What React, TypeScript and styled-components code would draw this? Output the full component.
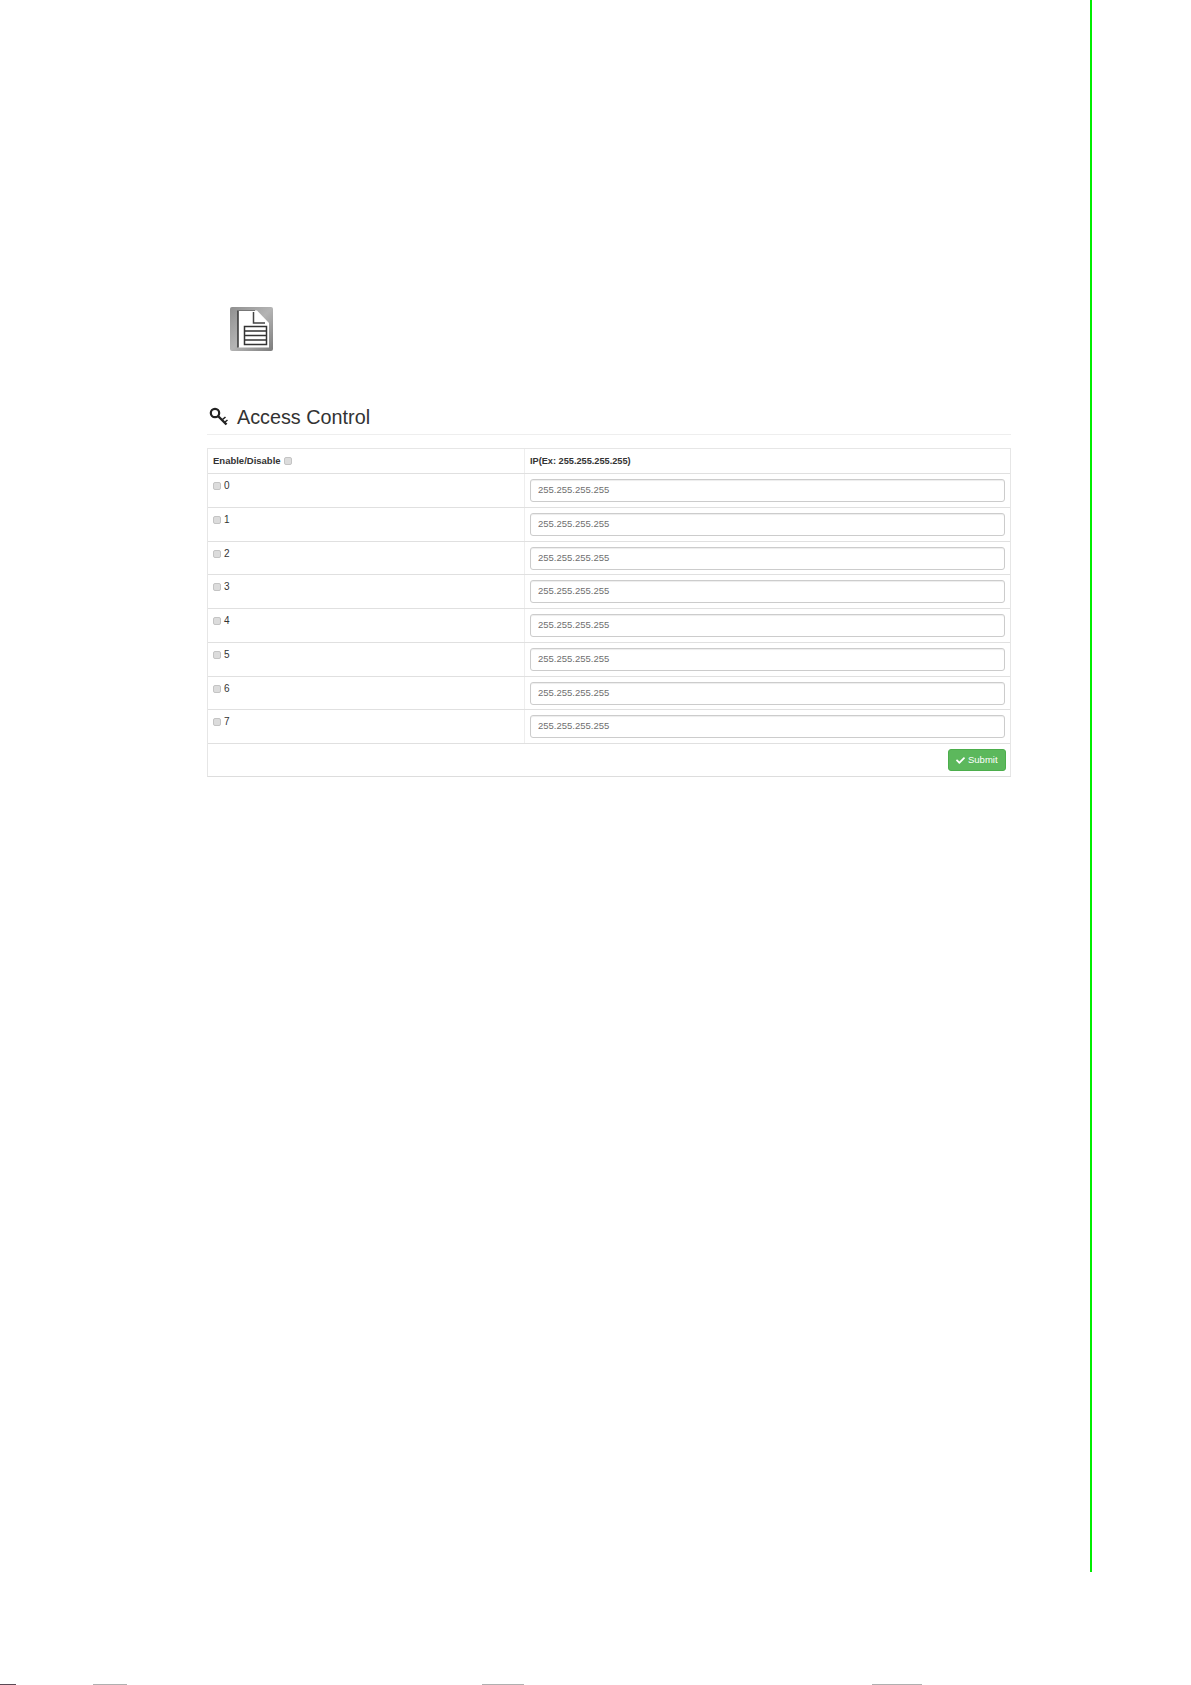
import styled, { createGlobalStyle } from 'styled-components';
import { FaCheck } from 'react-icons/fa';

const GlobalStyle = createGlobalStyle`
  html, body {
    margin: 0;
    padding: 0;
    background: #fff;
  }
  body {
    font-family: "Liberation Sans", Arial, sans-serif;
    color: #333;
  }
`

const Page = styled.div`
  width: 1191px;
  height: 1685px;
  overflow: hidden;
  display: flex;
  flex-direction: column;
`

const Sheet = styled.div`
  box-sizing: border-box;
  width: 1092px;
  height: 1572px;
  border-right: 2px solid #00ee00;
  padding: 307px 0 0 207px;
`

const NoteIcon = styled.svg`
  display: block;
  width: 44px;
  height: 45px;
  margin-left: 23px;
`

const Section = styled.section`
  width: 804px;
  margin-top: 53px;
`

const HeadingRow = styled.div`
  display: flex;
  align-items: center;
  gap: 9px;
  height: 23px;
  padding: 0 0 6px 2px;
  border-bottom: 1px solid #eee;
`

const KeyIcon = styled.svg`
  width: 19px;
  height: 19px;
  flex: none;
`

const Heading = styled.h2`
  margin: 0;
  font-size: 19.8px;
  font-weight: 400;
  line-height: 24px;
  color: #333;
`

const Table = styled.div`
  margin-top: 13px;
  border: 1px solid #e6e6e6;
  border-bottom-color: #ddd;
  font-size: 9.5px;
`

const Row = styled.div`
  display: grid;
  grid-template-columns: 316px 1fr;
  height: 33.75px;
  box-sizing: border-box;
  border-bottom: 1px solid #e0e0e0;
`

const HeaderRow = styled(Row)`
  height: 25px;
  font-weight: 700;
  line-height: 24px;
`

const Cell = styled.div`
  display: flex;
  align-items: flex-start;
  gap: 3px;
  padding-left: 5px;
  min-width: 0;
`

const HeaderCell = styled(Cell)`
  align-items: center;
  height: 24px;
`

const IpCell = styled(Cell)`
  border-left: 1px solid #eee;
  padding: 0 5px;
`

const HeaderIpLabel = styled.span`
  font-size: 9.2px;
`

const Check = styled.input.attrs({ type: 'checkbox' })`
  appearance: none;
  box-sizing: border-box;
  flex: none;
  width: 8px;
  height: 8px;
  margin: 8px 0 0;
  border: 1px solid #c4c4c4;
  border-radius: 2px;
  background: #dcdcdc;
`

const HeaderCheck = styled(Check)`
  margin: 0;
`

const Index = styled.span`
  margin: 6px 0 0;
  font-size: 10px;
  line-height: 12px;
  color: #333;
`

const IpInput = styled.input`
  box-sizing: border-box;
  width: 100%;
  height: 23px;
  margin-top: 5px;
  padding: 0 7px 2px 7px;
  border: 1px solid #ccc;
  border-radius: 3px;
  box-shadow: inset 0 1px 1px rgba(0, 0, 0, 0.075);
  background: #fff;
  font-family: inherit;
  font-size: 9.5px;
  outline: none;

  &::placeholder {
    color: #6f6f6f;
    opacity: 1;
  }
`

const TableFooter = styled.div`
  display: flex;
  justify-content: flex-end;
  align-items: center;
  height: 32px;
  padding-right: 4px;
`

const SubmitButton = styled.button`
  box-sizing: border-box;
  display: flex;
  align-items: center;
  gap: 3px;
  height: 22px;
  width: 58px;
  padding: 0 0 0 7px;
  border: 1px solid #4cae4c;
  border-radius: 3px;
  background: #5cb85c;
  color: #fff;
  font-family: inherit;
  font-size: 9.5px;
  line-height: 1;
`

const FooterStrip = styled.div`
  position: relative;
  flex: 1;
`

const Clip = styled.i<{ $left: number; $width: number; $dark?: boolean }>`
  position: absolute;
  bottom: 0;
  left: ${(p) => p.$left}px;
  width: ${(p) => p.$width}px;
  height: 1px;
  background: ${(p) => (p.$dark ? '#5a4a55' : '#b0b0b0')};
`

const rows = [0, 1, 2, 3, 4, 5, 6, 7]

export default function App() {
  return (
    <Page>
      <GlobalStyle />
      <Sheet>
        <NoteIcon viewBox="0 0 44 45">
          <defs>
            <linearGradient id="noteBg" x1="0" y1="0" x2="1" y2="1">
              <stop offset="0" stopColor="#8f8f8f" />
              <stop offset="0.5" stopColor="#b4b4b4" />
              <stop offset="1" stopColor="#7c7c7c" />
            </linearGradient>
          </defs>
          <rect width="43" height="44" rx="2" fill="url(#noteBg)" />
          <path d="M8 3.5H27L39 16V40.5H8Z" fill="#fff" />
          <path d="M8 3.5V40.5" stroke="#333" strokeWidth="1.5" fill="none" />
          <path d="M8 3.5H25" stroke="#777" strokeWidth="1" fill="none" />
          <path d="M23.5 5V16H35" stroke="#444" strokeWidth="1.5" fill="none" />
          <path
            d="M14.5 19.5H36.5V37.5H14.5ZM14.5 24H36.5M14.5 28.5H36.5M14.5 33H36.5"
            stroke="#333"
            strokeWidth="1.5"
            fill="none"
          />
        </NoteIcon>
        <Section>
          <HeadingRow>
            <KeyIcon viewBox="0 0 19 19">
              <circle cx="6" cy="6" r="4.2" fill="none" stroke="#222" strokeWidth="2.2" />
              <path d="M9 9L17.5 17.5" stroke="#222" strokeWidth="2.4" fill="none" />
              <path d="M13.5 12.5L16.5 10M16 15L18.5 13" stroke="#222" strokeWidth="1.6" fill="none" />
            </KeyIcon>
            <Heading>Access Control</Heading>
          </HeadingRow>
          <Table>
            <HeaderRow>
              <HeaderCell>
                Enable/Disable
                <HeaderCheck />
              </HeaderCell>
              <IpCell>
                <HeaderIpLabel>IP(Ex: 255.255.255.255)</HeaderIpLabel>
              </IpCell>
            </HeaderRow>
            {rows.map((n) => (
              <Row key={n}>
                <Cell>
                  <Check />
                  <Index>{n}</Index>
                </Cell>
                <IpCell>
                  <IpInput placeholder="255.255.255.255" />
                </IpCell>
              </Row>
            ))}
            <TableFooter>
              <SubmitButton type="button">
                <FaCheck size={9} />
                Submit
              </SubmitButton>
            </TableFooter>
          </Table>
        </Section>
      </Sheet>
      <FooterStrip>
        <Clip $left={0} $width={16} $dark />
        <Clip $left={93} $width={34} />
        <Clip $left={482} $width={42} />
        <Clip $left={872} $width={50} />
      </FooterStrip>
    </Page>
  )
}
